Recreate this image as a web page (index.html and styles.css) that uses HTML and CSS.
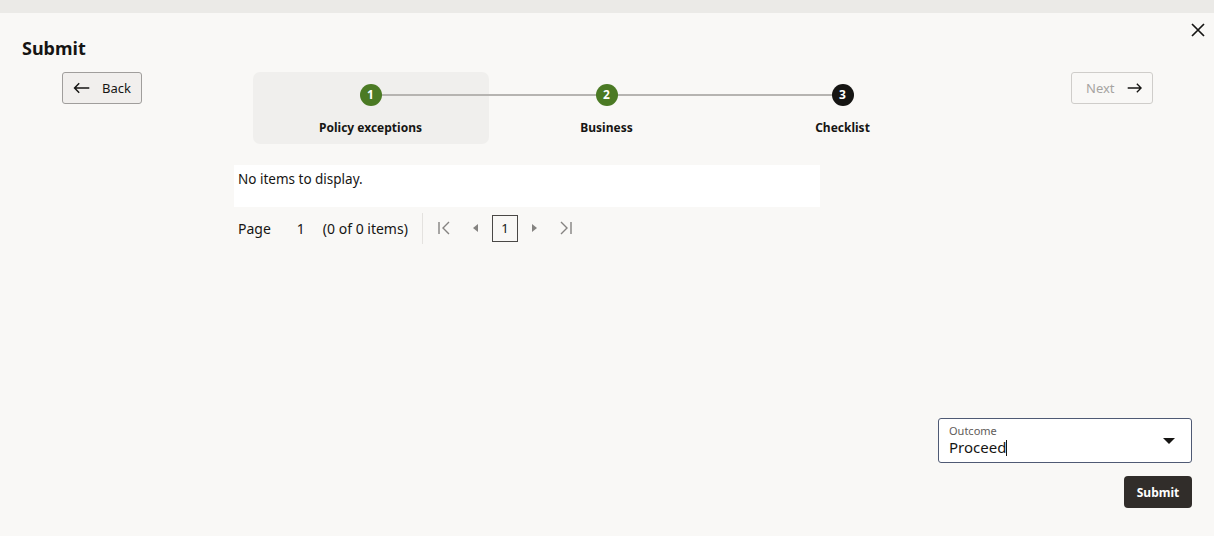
FILE: index.html
```html
<!DOCTYPE html>
<html lang="en">
<head>
    <meta charset="UTF-8">
    <meta name="viewport" content="width=device-width, initial-scale=1.0">
    <title>Submit</title>
    <link rel="stylesheet" href="styles.css">
</head>
<body>
    <div class="top-strip"></div>
    <div class="dialog">
        <div class="dialog-header">
            <h2>Submit</h2>
            <button class="close-btn" aria-label="Close">
                <svg width="14" height="14" viewBox="0 0 14 14"><path d="M1 1 L13 13 M13 1 L1 13" stroke="#161513" stroke-width="1.7" fill="none"/></svg>
            </button>
        </div>

        <div class="nav-row">
            <button class="nav-btn back-btn">
                <svg width="22" height="14" viewBox="0 0 22 14"><path d="M21 7 H2 M8 1 L2 7 L8 13" stroke="#161513" stroke-width="1.9" fill="none"/></svg>
                <span>Back</span>
            </button>

            <div class="train">
                <div class="step active">
                    <div class="step-dot done">1</div>
                    <div class="step-label">Policy exceptions</div>
                </div>
                <div class="step">
                    <div class="step-dot done">2</div>
                    <div class="step-label">Business</div>
                </div>
                <div class="step">
                    <div class="step-dot current">3</div>
                    <div class="step-label">Checklist</div>
                </div>
            </div>

            <button class="nav-btn next-btn" disabled>
                <span>Next</span>
                <svg width="22" height="14" viewBox="0 0 22 14"><path d="M1 7 H20 M14 1 L20 7 L14 13" stroke="#161513" stroke-width="1.9" fill="none"/></svg>
            </button>
        </div>

        <div class="content">
            <div class="empty-table">No items to display.</div>
            <div class="pager">
                <span class="pager-text">Page</span>
                <span class="pager-num">1</span>
                <span class="pager-text">(0 of 0 items)</span>
                <span class="pager-sep"></span>
                <span class="pager-icon">
                    <svg width="14" height="14" viewBox="0 0 14 14"><path d="M2 1 V13 M12 1 L6 7 L12 13" stroke="#858381" stroke-width="1.4" fill="none"/></svg>
                </span>
                <span class="pager-icon">
                    <svg width="10" height="10" viewBox="0 0 10 10"><path d="M7 1 L2 5 L7 9 Z" fill="#858381"/></svg>
                </span>
                <span class="pager-page">1</span>
                <span class="pager-icon">
                    <svg width="10" height="10" viewBox="0 0 10 10"><path d="M3 1 L8 5 L3 9 Z" fill="#858381"/></svg>
                </span>
                <span class="pager-icon">
                    <svg width="14" height="14" viewBox="0 0 14 14"><path d="M2 1 L8 7 L2 13 M12 1 V13" stroke="#858381" stroke-width="1.4" fill="none"/></svg>
                </span>
            </div>
        </div>

        <div class="footer">
            <div class="select-field">
                <div class="select-text">
                    <label>Outcome</label>
                    <div class="select-value">Proceed<span class="caret-line"></span></div>
                </div>
                <svg width="12" height="8" viewBox="0 0 12 8"><path d="M0 1 H12 L6 7 Z" fill="#161513"/></svg>
            </div>
            <button class="submit-btn">Submit</button>
        </div>
    </div>
</body>
</html>
```

FILE: styles.css
```css
body {
    margin: 0;
    font-family: "Noto Sans", "Open Sans", sans-serif;
    color: #161513;
    background-color: #ffffff;
}

.top-strip {
    height: 13px;
    background-color: #ebeae7;
}

.dialog {
    background-color: #f9f8f6;
    height: 523px;
    padding: 0 22px 0 22px;
    box-sizing: border-box;
    display: flex;
    flex-direction: column;
}

.dialog-header {
    display: flex;
    justify-content: space-between;
    align-items: flex-start;
    padding-top: 23px;
}

h2 {
    margin: 0;
    font-size: 18px;
    font-weight: bold;
    line-height: 24px;
}

.close-btn {
    background: none;
    border: none;
    padding: 0;
    margin: -13px -13px 0 0;
    cursor: pointer;
}

.nav-row {
    display: flex;
    align-items: flex-start;
    justify-content: space-between;
    padding: 12px 39px 0 40px;
}

.nav-btn {
    display: flex;
    align-items: center;
    gap: 12px;
    height: 32px;
    border-radius: 3px;
    font-family: inherit;
    font-size: 13px;
    box-sizing: border-box;
}

.back-btn {
    width: 80px;
    padding: 0 10px;
    border: 1px solid #a09e9c;
    background-color: #f1efed;
    color: #161513;
}

.next-btn {
    width: 82px;
    padding: 0 10px 0 14px;
    border: 1.5px solid #cfcdca;
    background-color: #f9f8f6;
    color: #a6a4a1;
}

.train {
    display: flex;
}

.step {
    position: relative;
    width: 236px;
    height: 72px;
    display: flex;
    flex-direction: column;
    align-items: center;
    border-radius: 7px;
}

.step.active {
    background-color: #f0efed;
}

.step + .step::before {
    content: "";
    position: absolute;
    top: 22px;
    left: -118px;
    width: 236px;
    height: 2px;
    background-color: #b6b4b1;
}

.step-dot {
    margin-top: 12px;
    width: 22px;
    height: 22px;
    border-radius: 50%;
    color: #ffffff;
    font-size: 12px;
    font-weight: bold;
    line-height: 22px;
    text-align: center;
    position: relative;
    z-index: 1;
}

.step-dot.done {
    background-color: #4b7a24;
}

.step-dot.current {
    background-color: #161513;
}

.step-label {
    margin-top: 13px;
    font-size: 12px;
    font-weight: bold;
}

.content {
    margin: 21px 0 0 212px;
    width: 586px;
}

.empty-table {
    background-color: #ffffff;
    height: 42px;
    padding: 5px 4px;
    box-sizing: border-box;
    font-size: 13.5px;
}

.pager {
    display: flex;
    align-items: center;
    height: 42px;
    padding-left: 4px;
    font-size: 14px;
}

.pager-num {
    margin: 0 18px 0 26px;
}

.pager-sep {
    width: 1px;
    height: 31px;
    background-color: #e4e2df;
    margin: 0 5px 0 14px;
}

.pager-icon {
    display: flex;
    align-items: center;
    justify-content: center;
    width: 32px;
    height: 28px;
}

.pager-page {
    width: 26px;
    height: 27px;
    border: 1px solid #4a4846;
    box-sizing: border-box;
    display: flex;
    align-items: center;
    justify-content: center;
    font-size: 13px;
}

.footer {
    margin-top: auto;
    margin-bottom: 28px;
    display: flex;
    flex-direction: column;
    align-items: flex-end;
    gap: 13px;
}

.select-field {
    width: 254px;
    height: 45px;
    border: 1.5px solid #4f5a74;
    border-radius: 3px;
    background-color: #ffffff;
    box-sizing: border-box;
    display: flex;
    align-items: center;
    justify-content: space-between;
    padding: 0 16px 0 10px;
}

.select-text label {
    display: block;
    font-size: 11px;
    color: #5f5c59;
    line-height: 12px;
    margin-bottom: 2px;
}

.select-value {
    font-size: 15px;
    line-height: 16px;
}

.caret-line {
    display: inline-block;
    width: 1px;
    height: 16px;
    background-color: #161513;
    vertical-align: -3px;
}

.submit-btn {
    width: 68px;
    height: 32px;
    border: none;
    border-radius: 4px;
    background-color: #312d2a;
    color: #ffffff;
    font-family: inherit;
    font-size: 12px;
    font-weight: bold;
    cursor: pointer;
}
```
